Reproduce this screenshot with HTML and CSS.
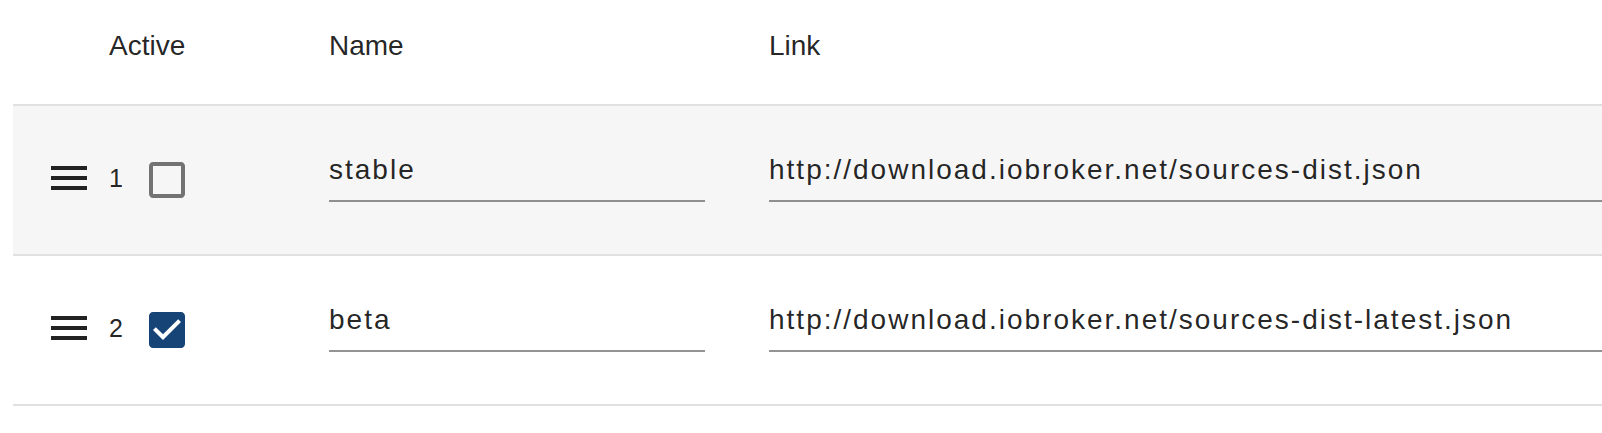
FILE: index.html
```html
<!DOCTYPE html>
<html lang="en">

<head>
    <meta charset="UTF-8">
    <title>Repositories</title>
    <link rel="stylesheet" href="styles.css">
</head>

<body>
    <div class="table">
        <div class="row head">
            <div class="cell"></div>
            <div class="cell">Active</div>
            <div class="cell">Name</div>
            <div class="cell">Link</div>
        </div>

        <div class="row item odd">
            <div class="cell handle">
                <svg width="48" height="48" viewBox="0 0 24 24"><path fill="#222" d="M3 18h18v-2H3v2zm0-5h18v-2H3v2zm0-7v2h18V6H3z"/></svg>
            </div>
            <div class="cell active">
                <span class="num">1</span>
                <svg class="check" width="48" height="48" viewBox="0 0 24 24"><path fill="#737373" d="M19 5v14H5V5h14m0-2H5c-1.1 0-2 .9-2 2v14c0 1.1.9 2 2 2h14c1.1 0 2-.9 2-2V5c0-1.1-.9-2-2-2z"/></svg>
            </div>
            <div class="cell text">
                <input type="text" class="field name" value="stable">
            </div>
            <div class="cell text">
                <input type="text" class="field link" value="http://download.iobroker.net/sources-dist.json">
            </div>
        </div>

        <div class="row item">
            <div class="cell handle">
                <svg width="48" height="48" viewBox="0 0 24 24"><path fill="#222" d="M3 18h18v-2H3v2zm0-5h18v-2H3v2zm0-7v2h18V6H3z"/></svg>
            </div>
            <div class="cell active">
                <span class="num">2</span>
                <svg class="check" width="48" height="48" viewBox="0 0 24 24"><path fill="#164477" d="M19 3H5c-1.11 0-2 .9-2 2v14c0 1.1.89 2 2 2h14c1.11 0 2-.9 2-2V5c0-1.1-.89-2-2-2zm-9 14l-5-5 1.41-1.41L10 14.17l7.59-7.59L19 8l-9 9z"/></svg>
            </div>
            <div class="cell text">
                <input type="text" class="field name" value="beta">
            </div>
            <div class="cell text">
                <input type="text" class="field link" value="http://download.iobroker.net/sources-dist-latest.json">
            </div>
        </div>
    </div>
</body>

</html>
```

FILE: styles.css
```css
/* repository table */
body {
    font-family: 'Liberation Sans', Arial, sans-serif;
    background-color: #ffffff;
    color: rgba(0, 0, 0, 0.87);
    margin: 0;
    padding: 0 0 0 13px;
    overflow: hidden;
}

.row {
    display: grid;
    grid-template-columns: 96px 220px 440px 1fr;
    border-bottom: 2px solid #e0e0e0;
    box-sizing: border-box;
}

.head {
    height: 106px;
    padding-top: 22px;
    font-size: 28px;
    line-height: 48px;
}

.item {
    height: 150px;
}

.odd {
    background-color: #f6f6f6;
}

.handle {
    padding: 48px 0 0 32px;
}

.handle svg,
.check {
    display: block;
}

.active {
    display: flex;
    align-items: flex-start;
    padding-top: 50px;
}

.num {
    width: 14px;
    margin-top: 6px;
    font-size: 25px;
    line-height: 33px;
}

.check {
    margin-left: 20px;
}

.text {
    padding-top: 44px;
    min-width: 0;
}

.field {
    display: block;
    height: 40px;
    padding: 0 0 10px;
    margin: 0;
    border: none;
    border-bottom: 2px solid rgba(0, 0, 0, 0.42);
    background: transparent;
    font-family: inherit;
    font-size: 28px;
    letter-spacing: 2px;
    color: rgba(0, 0, 0, 0.87);
    outline: none;
}

.name {
    width: 376px;
}

.link {
    width: 100%;
    box-sizing: content-box;
}
```
